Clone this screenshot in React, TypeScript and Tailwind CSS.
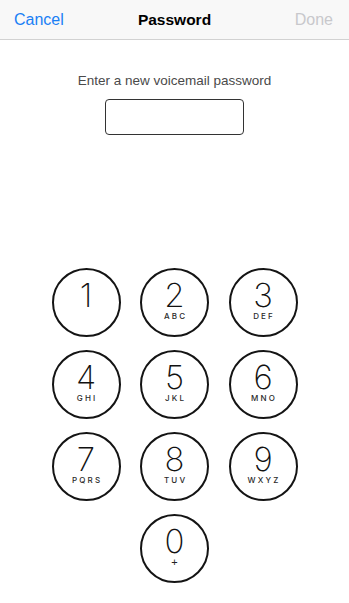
import React from "react";

const keys: { d: string; l: string }[] = [
  { d: "1", l: "" },
  { d: "2", l: "ABC" },
  { d: "3", l: "DEF" },
  { d: "4", l: "GHI" },
  { d: "5", l: "JKL" },
  { d: "6", l: "MNO" },
  { d: "7", l: "PQRS" },
  { d: "8", l: "TUV" },
  { d: "9", l: "WXYZ" },
];

function Key({ d, l }: { d: string; l: string }) {
  return (
    <div className="w-[69px] h-[69px] rounded-full border-2 border-[#141414] flex flex-col items-center pt-[9px] box-border">
      <div className="text-[33px] leading-[32px] font-extralight text-[#111] font-['Inter',sans-serif]">
        {d}
      </div>
      <div className="text-[8px] leading-[10px] tracking-[2.2px] pl-[2.2px] font-medium text-[#2a2a2a] font-['Inter',sans-serif]">
        {l}
      </div>
    </div>
  );
}

export default function App() {
  return (
    <div className="w-[349px] h-[603px] bg-white overflow-hidden font-['Liberation_Sans',Arial,sans-serif]">
      <div className="h-[40px] bg-[#f8f8f8] border-b border-[#d2d2d2] flex items-center justify-between px-[14px] box-border relative">
        <span className="text-[16px] text-[#1a7ff5]">Cancel</span>
        <span className="absolute left-1/2 -translate-x-1/2 text-[15.5px] font-bold text-black">
          Password
        </span>
        <span className="text-[16px] text-[#c8c8cc] pr-[2px]">Done</span>
      </div>
      <div className="flex flex-col items-center pt-[33px]">
        <div className="text-[13.5px] leading-[16px] text-[#4a4a4a]">
          Enter a new voicemail password
        </div>
        <div className="mt-[10px] w-[139px] h-[36px] border-[1.5px] border-[#333] rounded-[4px] bg-white" />
      </div>
      <div className="mt-[133px] grid grid-cols-[69px_69px_69px] justify-center gap-x-[19.5px] gap-y-[13px]">
        {keys.map((k) => (
          <Key key={k.d} d={k.d} l={k.l} />
        ))}
        <div />
        <div className="w-[69px] h-[69px] rounded-full border-2 border-[#141414] flex flex-col items-center pt-[9px] box-border">
          <div className="text-[33px] leading-[32px] font-extralight text-[#111] font-['Inter',sans-serif]">
            0
          </div>
          <div className="text-[11px] leading-[12px] text-[#222] -mt-[1px]">+</div>
        </div>
        <div />
      </div>
    </div>
  );
}
